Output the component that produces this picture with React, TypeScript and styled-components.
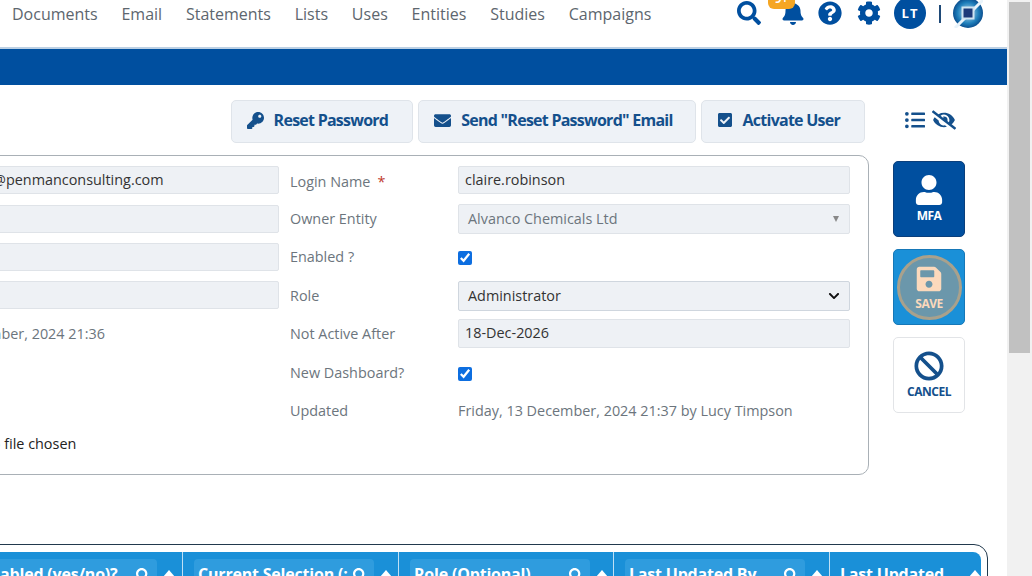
import React from "react";
import styled, { createGlobalStyle } from "styled-components";
import {
  FaBan,
  FaBell,
  FaCheckSquare,
  FaChevronDown,
  FaCog,
  FaEnvelope,
  FaEyeSlash,
  FaKey,
  FaListUl,
  FaQuestionCircle,
  FaSave,
  FaSearch,
  FaUser,
} from "react-icons/fa";

const navy = "#14508c";
const brand = "#004f9f";
const sky = "#1a90d8";

const Global = createGlobalStyle`
  html, body { margin: 0; padding: 0; height: 100%; overflow: hidden; background: #fff; }
  #root { height: 100%; }
  * { box-sizing: border-box; }
  body { font-family: "Open Sans", "Liberation Sans", sans-serif; }
`;

const Page = styled.div`
  display: flex;
  width: 1032px;
  height: 576px;
  overflow: hidden;
`;
const Main = styled.div`
  width: 1007px;
  height: 576px;
  overflow: hidden;
  flex: none;
`;
const Scrollbar = styled.div`
  width: 25px;
  height: 576px;
  background: #f1f1f1;
  padding: 2px 2px 0;
`;
const ScrollThumb = styled.div`
  height: 351px;
  background: #c1c1c1;
`;

const Header = styled.header`
  height: 49px;
  border-bottom: 2px solid #bcd0e4;
  display: flex;
  align-items: flex-start;
  justify-content: space-between;
  padding: 0 24px 0 12px;
`;
const Nav = styled.nav`
  display: flex;
  gap: 23.8px;
  height: 28px;
  align-items: center;
`;
const NavLink = styled.a`
  font-size: 16px;
  color: #5d666e;
  line-height: 28px;
`;
const HeaderIcons = styled.div`
  display: flex;
  align-items: center;
  height: 26px;
  color: ${brand};
`;
const BellWrap = styled.div`
  position: relative;
  display: flex;
  margin-left: 20px;
  margin-right: 13px;
`;
const Badge = styled.span`
  position: absolute;
  left: -13px;
  top: -12px;
  width: 27px;
  height: 20px;
  background: #f5a623;
  border-radius: 6px;
  color: #fff;
  font-size: 12px;
  font-weight: 700;
  text-align: center;
  line-height: 20px;
`;
const Avatar = styled.div`
  width: 32px;
  height: 32px;
  margin-left: 13px;
  border-radius: 50%;
  background: ${brand};
  color: #fff;
  font-size: 13px;
  font-weight: 700;
  letter-spacing: 1px;
  display: flex;
  align-items: center;
  justify-content: center;
  flex: none;
`;
const Divider = styled.div`
  width: 2px;
  height: 18px;
  margin: 2px 12px 0 13px;
  background: #1f4a78;
`;
const LogoSvg = styled.svg`
  width: 30px;
  height: 30px;
  flex: none;
`;
const GearSlot = styled.span`
  display: flex;
  margin-left: 15px;
`;

const BlueBar = styled.div`
  height: 36px;
  background: ${brand};
`;

const Toolbar = styled.div`
  display: flex;
  justify-content: flex-end;
  align-items: center;
  gap: 5px;
  margin-top: 15px;
  padding-right: 51px;
`;
const ActionButton = styled.button<{ $right?: number }>`
  height: 43px;
  display: flex;
  align-items: center;
  gap: 10px;
  padding: 0 ${(p) => p.$right ?? 24}px 3px 15px;
  border: 1px solid #dfe4ea;
  border-radius: 5px;
  background: #eef2f7;
  color: ${navy};
  font-family: inherit;
  font-size: 16px;
  font-weight: 700;
  letter-spacing: -0.75px;
  white-space: nowrap;
`;
const ViewIcons = styled.div`
  display: flex;
  align-items: center;
  gap: 7px;
  margin-left: 35px;
  margin-bottom: 3px;
  color: ${navy};
`;

const Body = styled.div`
  display: flex;
  margin: 12px 0 0 -290px;
  align-items: flex-start;
`;
const Panel = styled.section`
  width: 1159px;
  flex: none;
  height: 320px;
  border: 1px solid #a9b0b6;
  border-radius: 10px;
  padding: 5px 17px 5px 14px;
  display: grid;
  grid-template-columns: 161px 393px 179px 392px;
  grid-auto-rows: 38.4px;
  align-items: center;
`;
const FieldLabel = styled.label<{ $nudge?: number }>`
  font-size: 14.4px;
  color: #6c757d;
  padding-left: 11px;
  line-height: 20px;
  margin-top: ${(p) => p.$nudge ?? 0}px;
`;
const Req = styled.span`
  color: #c0392b;
  margin-left: 7px;
`;
const InputBox = styled.input<{ $h?: number }>`
  height: ${(p) => p.$h ?? 28}px;
  width: 100%;
  background: #eef1f5;
  border: 1px solid #dfe3e8;
  border-radius: 2px;
  padding: 0 6px 2px;
  color: #333;
  font-family: inherit;
  font-size: 14.4px;
  outline: none;
`;
const SelectBox = styled.div<{ $dark?: boolean }>`
  height: 30px;
  width: 100%;
  margin-top: ${(p) => (p.$dark ? "1px" : "0")};
  background: #eef1f5;
  border: 1px solid ${(p) => (p.$dark ? "#cfd6de" : "#dfe3e8")};
  border-radius: 2px;
  padding: 0 9px;
  display: flex;
  align-items: center;
  justify-content: space-between;
  color: ${(p) => (p.$dark ? "#333" : "#6c757d")};
  font-size: 14.4px;
`;
const Caret = styled.span`
  width: 0;
  height: 0;
  margin-right: 1px;
  border-left: 3.5px solid transparent;
  border-right: 3.5px solid transparent;
  border-top: 6px solid #888;
`;
const CheckCell = styled.div`
  display: flex;
  padding-top: 3px;
`;
const Check = styled.input`
  width: 14px;
  height: 14px;
  margin: 0;
  accent-color: #0d6ee0;
`;
const StaticText = styled.div`
  font-size: 14.4px;
  color: #6c757d;
  white-space: nowrap;
`;
const FileRow = styled.div`
  font-size: 14.4px;
  color: #222;
  white-space: nowrap;
  align-self: start;
  padding-top: 4px;
  display: flex;
  align-items: center;
`;
const FileButton = styled.span`
  width: 95px;
  flex: none;
`;

const Side = styled.aside`
  width: 72px;
  margin: 6px 0 0 24px;
  display: flex;
  flex-direction: column;
  gap: 12px;
  flex: none;
`;
const SideButton = styled.button<{ $kind: "mfa" | "save" | "cancel" }>`
  width: 72px;
  height: 76px;
  padding: 0;
  border-radius: 5px;
  font-family: inherit;
  font-size: 12px;
  font-weight: 700;
  letter-spacing: -0.5px;
  display: flex;
  flex-direction: column;
  align-items: center;
  justify-content: center;
  background: ${(p) => (p.$kind === "mfa" ? brand : p.$kind === "save" ? sky : "#fff")};
  color: ${(p) => (p.$kind === "cancel" ? navy : "#fff")};
  border: 1px solid ${(p) => (p.$kind === "cancel" ? "#e2e4e7" : p.$kind === "save" ? "#1678b8" : "#0a3f7c")};
`;
const SideLabel = styled.span`
  margin-top: 3px;
  line-height: 16px;
`;
const SaveRing = styled.span`
  width: 65px;
  height: 65px;
  border-radius: 50%;
  background: #6b97ab;
  border: 3px solid #a9a18c;
  color: #fbd9bc;
  display: flex;
  flex-direction: column;
  align-items: center;
  justify-content: center;
  padding-top: 2px;
`;

const TableFrame = styled.div`
  margin: 69px 19px 0 -290px;
  border: 1px solid #22394d;
  border-radius: 14px;
  padding: 7px 6px 0 0;
  height: 60px;
  overflow: hidden;
  display: flex;
`;
const TableHead = styled.div`
  flex: 1;
  display: flex;
  justify-content: flex-end;
  height: 60px;
  background: ${sky};
  border-radius: 0 8px 0 0;
  color: #fff;
  font-size: 16px;
  font-weight: 700;
  letter-spacing: -0.2px;
`;
const Col = styled.div<{ $w: number; $first?: boolean; $last?: boolean }>`
  width: ${(p) => p.$w}px;
  flex: none;
  display: flex;
  align-items: flex-start;
  padding: 7px 0 0 ${(p) => (p.$last ? 10 : 11)}px;
  border-left: ${(p) => (p.$first ? "0" : "1px solid #bfe0f5")};
`;
const FilterBox = styled.div`
  width: 180px;
  height: 30px;
  background: #2f9cde;
  border-radius: 4px;
  padding: 4px 7px 0 4px;
  display: flex;
  justify-content: space-between;
  white-space: nowrap;
  flex: none;
`;
const FilterText = styled.span`
  overflow: hidden;
  width: 152px;
`;
const LastText = styled.span`
  padding-top: 4px;
  flex: 1;
  white-space: nowrap;
`;
const SortIcon = styled.svg`
  width: 12px;
  height: 20px;
  margin: 10px 0 0 6px;
  flex: none;
`;
const SearchSlot = styled.span`
  display: flex;
  padding-top: 5px;
  flex: none;
`;

const Sort = () => (
  <SortIcon viewBox="0 0 12 20">
    <path d="M6 1 L12 8 H0 Z" fill="#fff" />
  </SortIcon>
);

const Logo = () => (
  <LogoSvg viewBox="0 0 30 30">
    <defs>
      <radialGradient id="lg" cx="50%" cy="50%" r="50%">
        <stop offset="30%" stopColor="#7fb8d8" />
        <stop offset="70%" stopColor="#1f7fbb" />
        <stop offset="100%" stopColor="#0b4f8f" />
      </radialGradient>
    </defs>
    <circle cx="15" cy="15" r="15" fill="url(#lg)" />
    <path d="M2 30 L30 2" stroke="#e8f3fa" strokeWidth="3" />
    <rect x="8.5" y="8.5" width="13" height="13" fill="#cfe4f1" />
    <rect x="10.5" y="10.5" width="9" height="9" fill="#1d3a7a" />
  </LogoSvg>
);

const navItems = ["Documents", "Email", "Statements", "Lists", "Uses", "Entities", "Studies", "Campaigns"];
const cols = [
  { t: "Enabled (yes/no)?", w: 216 },
  { t: "Current Selection (:", w: 216 },
  { t: "Role (Optional)", w: 215 },
  { t: "Last Updated By", w: 216 },
];

export default function App() {
  return (
    <Page>
      <Global />
      <Main>
        <Header>
          <Nav>
            {navItems.map((n) => (
              <NavLink key={n}>{n}</NavLink>
            ))}
          </Nav>
          <HeaderIcons>
            <FaSearch size={24} />
            <BellWrap>
              <FaBell size={24} />
              <Badge>9+</Badge>
            </BellWrap>
            <FaQuestionCircle size={24} />
            <GearSlot>
              <FaCog size={24} />
            </GearSlot>
            <Avatar>LT</Avatar>
            <Divider />
            <Logo />
          </HeaderIcons>
        </Header>
        <BlueBar />
        <Toolbar>
          <ActionButton>
            <FaKey size={17} />
            Reset Password
          </ActionButton>
          <ActionButton $right={22}>
            <FaEnvelope size={17} />
            Send "Reset Password" Email
          </ActionButton>
          <ActionButton>
            <FaCheckSquare size={16} />
            Activate User
          </ActionButton>
          <ViewIcons>
            <FaListUl size={20} />
            <FaEyeSlash size={24} />
          </ViewIcons>
        </Toolbar>
        <Body>
          <Panel>
            <span />
            <InputBox readOnly value="claire.robinson@penmanconsulting.com" />
            <FieldLabel $nudge={3}>
              Login Name<Req>*</Req>
            </FieldLabel>
            <InputBox readOnly value="claire.robinson" />

            <span />
            <InputBox readOnly value="" />
            <FieldLabel>Owner Entity</FieldLabel>
            <SelectBox>
              Alvanco Chemicals Ltd
              <Caret />
            </SelectBox>

            <span />
            <InputBox readOnly value="" />
            <FieldLabel>Enabled ?</FieldLabel>
            <CheckCell>
              <Check type="checkbox" checked readOnly />
            </CheckCell>

            <span />
            <InputBox readOnly value="" />
            <FieldLabel $nudge={1}>Role</FieldLabel>
            <SelectBox $dark>
              Administrator
              <FaChevronDown size={12} color="#111" />
            </SelectBox>

            <span />
            <StaticText>Friday, 13 December, 2024 21:36</StaticText>
            <FieldLabel>Not Active After</FieldLabel>
            <InputBox readOnly value="18-Dec-2026" $h={29} />

            <span />
            <span />
            <FieldLabel $nudge={1}>New Dashboard?</FieldLabel>
            <CheckCell>
              <Check type="checkbox" checked readOnly />
            </CheckCell>

            <span />
            <span />
            <FieldLabel>Updated</FieldLabel>
            <StaticText>Friday, 13 December, 2024 21:37 by Lucy Timpson</StaticText>

            <span />
            <FileRow>
              <FileButton />
              No file chosen
            </FileRow>
          </Panel>
          <Side>
            <SideButton $kind="mfa">
              <FaUser size={30} />
              <SideLabel>MFA</SideLabel>
            </SideButton>
            <SideButton $kind="save">
              <SaveRing>
                <FaSave size={28} />
                <SideLabel>SAVE</SideLabel>
              </SaveRing>
            </SideButton>
            <SideButton $kind="cancel">
              <FaBan size={30} />
              <SideLabel>CANCEL</SideLabel>
            </SideButton>
          </Side>
        </Body>
        <TableFrame>
          <TableHead>
            {cols.map((c, i) => (
              <Col key={c.t} $w={c.w} $first={i === 0}>
                <FilterBox>
                  <FilterText>{c.t}</FilterText>
                  <SearchSlot>
                    <FaSearch size={14} />
                  </SearchSlot>
                </FilterBox>
                <Sort />
              </Col>
            ))}
            <Col $w={152} $last>
              <LastText>Last Updated</LastText>
              <Sort />
            </Col>
          </TableHead>
        </TableFrame>
      </Main>
      <Scrollbar>
        <ScrollThumb />
      </Scrollbar>
    </Page>
  );
}
